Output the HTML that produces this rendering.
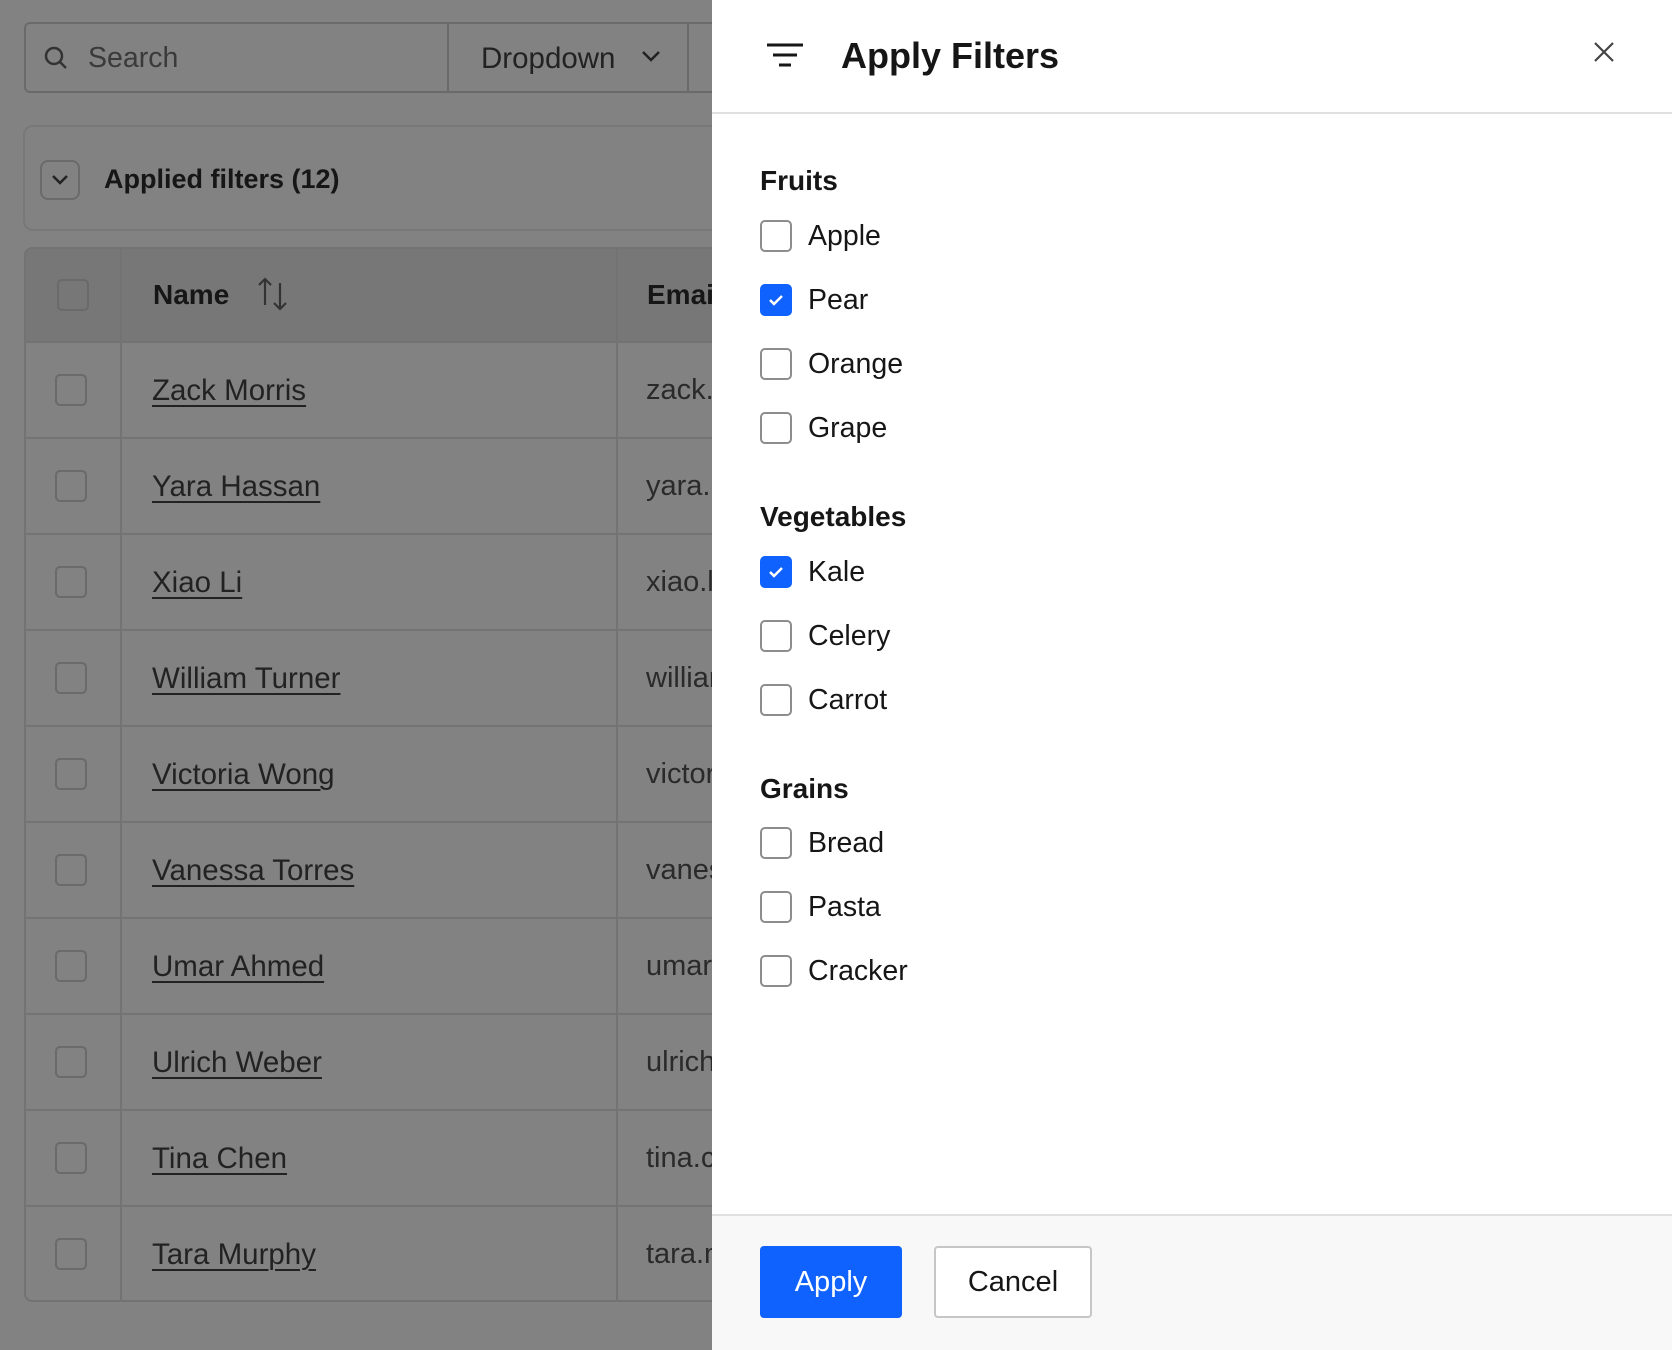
<!DOCTYPE html>
<html><head><meta charset="utf-8"><style>
*{box-sizing:border-box;margin:0;padding:0}
body{width:1672px;height:1350px;overflow:hidden;background:#828282;font-family:"Liberation Sans",sans-serif;position:relative;color:#161616}
.abs{position:absolute}
.cb{position:absolute;width:32px;height:32px;border:2px solid #6a6a6a;border-radius:5px}
.row{position:absolute;left:24px;width:700px;height:96px;border-top:2px solid #737373}
.row .cb{left:31px;top:31px}
.row .n{position:absolute;left:128px;top:31px;font-size:29.5px;color:#222;text-decoration:underline;text-underline-offset:5px;text-decoration-thickness:2px}
.row .e{position:absolute;left:622px;top:31px;font-size:29px;color:#2a2a2a}
.panel{position:absolute;left:712px;top:0;width:960px;height:1350px;background:#fff}
.h{position:absolute;left:48px;font-size:28px;font-weight:bold;color:#161616}
.it{position:absolute;left:48px;height:32px}
.it .b{position:absolute;left:0;top:0;width:32px;height:32px;border:2px solid #8d8d8d;border-radius:5px;background:#fff}
.it .b.on{background:#0f62fe;border-color:#0f62fe}
.it span{position:absolute;left:48px;top:0;font-size:28.5px;white-space:nowrap;color:#161616}
</style></head><body>
<div class="abs" style="left:24px;top:22px;width:700px;height:71px;border:2px solid #6a6a6a;border-radius:6px"></div>
<div class="abs" style="left:447px;top:22px;width:2px;height:71px;background:#6a6a6a"></div>
<div class="abs" style="left:687px;top:22px;width:2px;height:71px;background:#6a6a6a"></div>
<svg class="abs" style="left:42px;top:44px" width="28" height="28" viewBox="0 0 28 28"><circle cx="12" cy="12" r="8" fill="none" stroke="#333" stroke-width="2.5"/><path d="M18 18l6 6" stroke="#333" stroke-width="2.5"/></svg>
<div class="abs" style="left:88px;top:42px;font-size:28.5px;color:#3a3a3a">Search</div>
<div class="abs" style="left:481px;top:42px;font-size:29.5px;color:#222">Dropdown</div>
<svg class="abs" style="left:640px;top:48px" width="22" height="16" viewBox="0 0 22 16"><path d="M3 4l8 8 8-8" fill="none" stroke="#222" stroke-width="2.5"/></svg>
<div class="abs" style="left:23px;top:125px;width:720px;height:106px;border:2px solid #787878;border-radius:10px"></div>
<div class="abs" style="left:40px;top:160px;width:40px;height:40px;border:2px solid #6a6a6a;border-radius:8px"></div>
<svg class="abs" style="left:48px;top:170px" width="24" height="20" viewBox="0 0 24 20"><path d="M5 6l7 7 7-7" fill="none" stroke="#222" stroke-width="2.5"/></svg>
<div class="abs" style="left:104px;top:164px;font-size:27px;font-weight:bold;color:#161616">Applied filters (12)</div>
<div class="abs" style="left:24px;top:247px;width:720px;height:1055px;border:2px solid #737373;border-radius:8px;overflow:hidden">
 <div class="abs" style="left:0;top:0;width:720px;height:94px;background:#777"></div>
 <div class="abs" style="left:94px;top:0;width:2px;height:1055px;background:#737373"></div>
 <div class="abs" style="left:590px;top:0;width:2px;height:1055px;background:#737373"></div>
 <div class="cb" style="left:31px;top:30px"></div>
 <div class="abs" style="left:127px;top:30px;font-size:28px;font-weight:bold">Name</div>
 <svg class="abs" style="left:230px;top:26px" width="34" height="38" viewBox="0 0 34 38"><path d="M9 30V4M3 10l6-6 6 6M24 8v26M18 28l6 6 6-6" fill="none" stroke="#333" stroke-width="2.2"/></svg>
 <div class="abs" style="left:621px;top:30px;font-size:28px;font-weight:bold">Email</div>
</div>
<div class="row" style="top:341px"><div class="cb"></div><div class="n">Zack Morris</div><div class="e">zack.</div></div>
<div class="row" style="top:437px"><div class="cb"></div><div class="n">Yara Hassan</div><div class="e">yara.</div></div>
<div class="row" style="top:533px"><div class="cb"></div><div class="n">Xiao Li</div><div class="e">xiao.l</div></div>
<div class="row" style="top:629px"><div class="cb"></div><div class="n">William Turner</div><div class="e">william</div></div>
<div class="row" style="top:725px"><div class="cb"></div><div class="n">Victoria Wong</div><div class="e">victoria</div></div>
<div class="row" style="top:821px"><div class="cb"></div><div class="n">Vanessa Torres</div><div class="e">vanessa</div></div>
<div class="row" style="top:917px"><div class="cb"></div><div class="n">Umar Ahmed</div><div class="e">umar</div></div>
<div class="row" style="top:1013px"><div class="cb"></div><div class="n">Ulrich Weber</div><div class="e">ulrich</div></div>
<div class="row" style="top:1109px"><div class="cb"></div><div class="n">Tina Chen</div><div class="e">tina.c</div></div>
<div class="row" style="top:1205px"><div class="cb"></div><div class="n">Tara Murphy</div><div class="e">tara.m</div></div>

<div class="panel">
 <svg class="abs" style="left:54px;top:42px" width="38" height="28" viewBox="0 0 38 28"><path d="M1 3h36M7 13h24M13 23h12" stroke="#161616" stroke-width="3"/></svg>
 <div class="abs" style="left:129px;top:35px;font-size:36px;font-weight:bold;color:#161616">Apply Filters</div>
 <svg class="abs" style="left:880px;top:40px" width="24" height="24" viewBox="0 0 24 24"><path d="M3 3l18 18M21 3L3 21" stroke="#444" stroke-width="2.2"/></svg>
 <div class="abs" style="left:0;top:112px;width:960px;height:2px;background:#e0e0e0"></div>

 <div class="h" style="top:165px">Fruits</div>
 <div class="it" style="top:220px"><div class="b"></div><span>Apple</span></div>
 <div class="it" style="top:284px"><div class="b on"><svg width="28" height="28" viewBox="0 0 28 28"><path d="M8 14l4 4 8-8" fill="none" stroke="#fff" stroke-width="2.5"/></svg></div><span>Pear</span></div>
 <div class="it" style="top:348px"><div class="b"></div><span>Orange</span></div>
 <div class="it" style="top:412px"><div class="b"></div><span>Grape</span></div>
 <div class="h" style="top:501px">Vegetables</div>
 <div class="it" style="top:556px"><div class="b on"><svg width="28" height="28" viewBox="0 0 28 28"><path d="M8 14l4 4 8-8" fill="none" stroke="#fff" stroke-width="2.5"/></svg></div><span>Kale</span></div>
 <div class="it" style="top:620px"><div class="b"></div><span>Celery</span></div>
 <div class="it" style="top:684px"><div class="b"></div><span>Carrot</span></div>
 <div class="h" style="top:773px">Grains</div>
 <div class="it" style="top:827px"><div class="b"></div><span>Bread</span></div>
 <div class="it" style="top:891px"><div class="b"></div><span>Pasta</span></div>
 <div class="it" style="top:955px"><div class="b"></div><span>Cracker</span></div>

 <div class="abs" style="left:0;top:1214px;width:960px;height:136px;background:#f8f8f8;border-top:2px solid #e0e0e0"></div>
 <div class="abs" style="left:48px;top:1246px;width:142px;height:72px;background:#0f62fe;border-radius:4px;color:#fff;font-size:29px;text-align:center;line-height:72px">Apply</div>
 <div class="abs" style="left:222px;top:1246px;width:158px;height:72px;background:#fff;border:2px solid #c6c6c6;border-radius:4px;color:#161616;font-size:29px;text-align:center;line-height:68px">Cancel</div>
</div>
</body></html>
